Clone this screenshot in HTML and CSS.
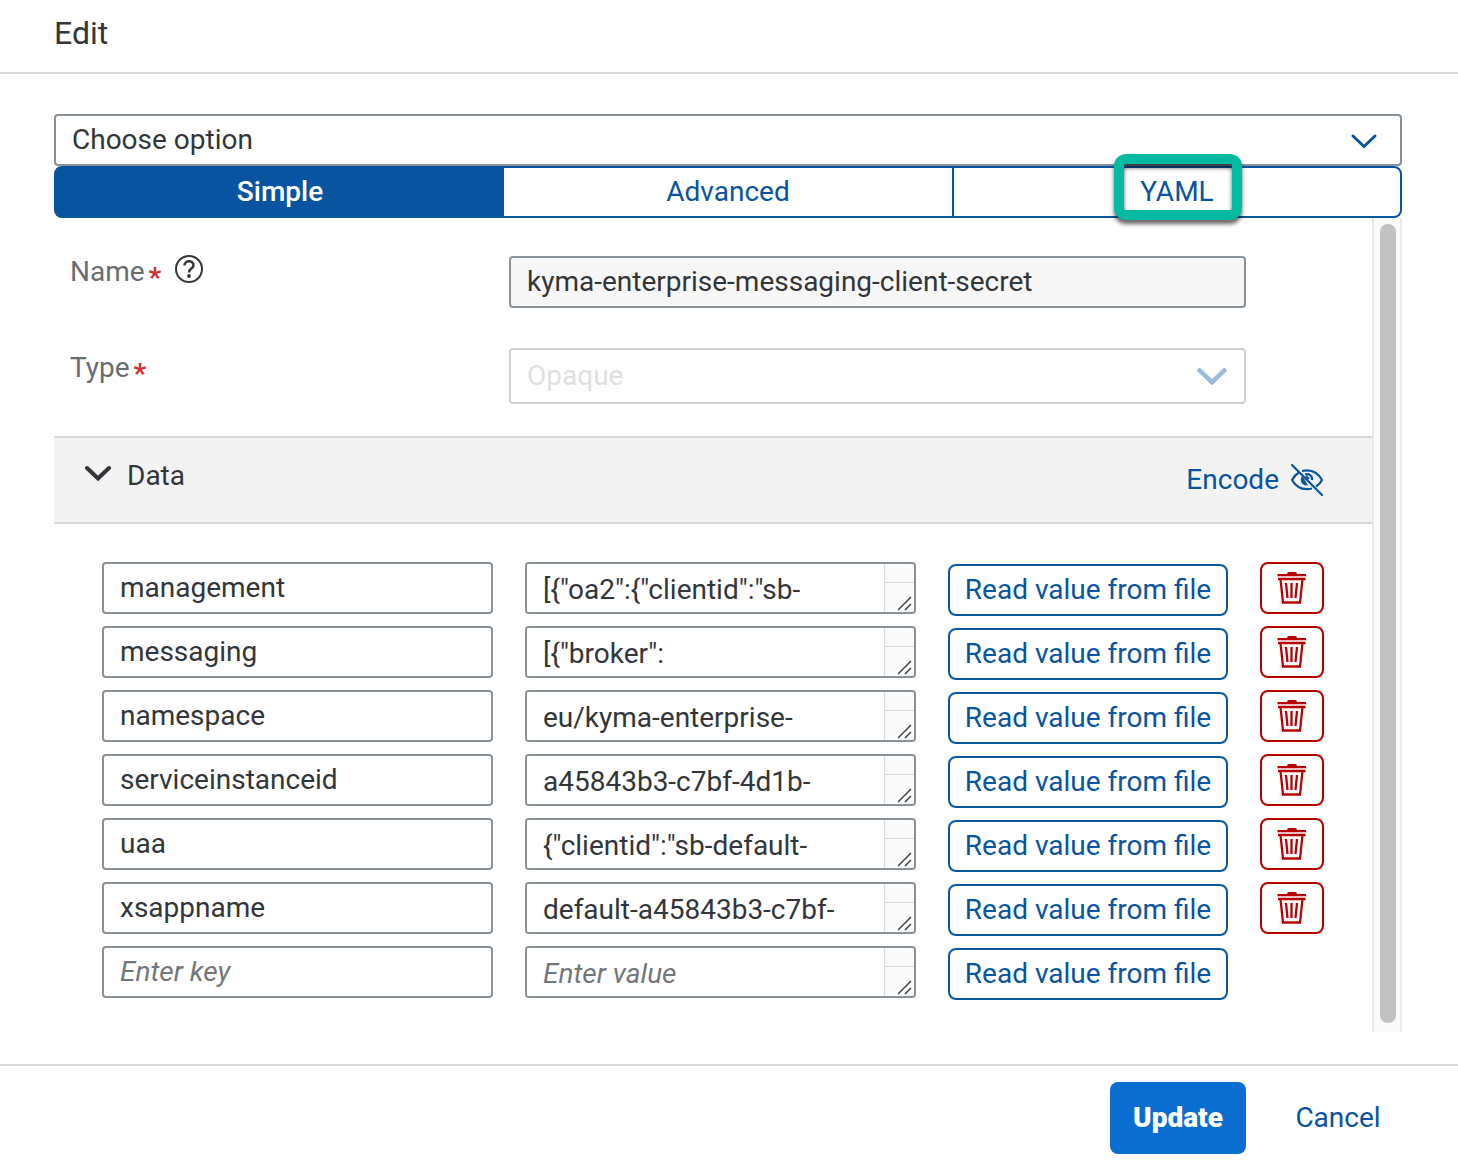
FILE: index.html
```html
<!DOCTYPE html>
<html lang="en">
<head>
<meta charset="utf-8">
<title>Edit</title>
<link rel="stylesheet" href="styles.css">
</head>
<body>
<svg class="sprite" aria-hidden="true">
  <symbol id="chevron" viewBox="0 0 28 16"><path d="M3 3l11 10.500L25 3" fill="none" stroke="currentColor" stroke-linecap="round"/></symbol>
  <symbol id="trash" viewBox="0 0 30 34">
    <path d="M10 3C10 1.500 11 1 13 1h4c2 0 3 .5 3 2h9v2.200H.5V3z" fill="currentColor"/>
    <path d="M1 8h27.500M3.500 8l2.500 23.500h17L25.500 8M9 12l1.500 15M14.500 12v15M20 12l-1.500 15" fill="none" stroke="currentColor" stroke-width="2.300"/>
  </symbol>
  <symbol id="grip" viewBox="0 0 16 16"><path d="M0 14L13 1M7 14l6-6" fill="none" stroke="#444" stroke-width="1.500"/></symbol>
</svg>
<main class="dialog">
  <header class="dialog-header"><h1>Edit</h1></header>
  <section class="dialog-body">
    <div class="select-box">
      <select class="field" aria-label="Choose option"><option>Choose option</option></select>
      <svg class="chevron chevron-thin"><use href="#chevron"/></svg>
    </div>
    <div class="tabs">
      <button class="tab tab-active" type="button">Simple</button>
      <button class="tab" type="button">Advanced</button>
      <button class="tab tab-last" type="button">YAML<span class="highlight"></span></button>
    </div>
    <div class="scroll-area">
      <div class="content">
        <div class="form">
          <div class="form-label"><label for="name">Name</label><span class="required">*</span>
            <svg class="help" viewBox="0 0 30 30"><circle cx="15" cy="15" r="13" fill="none" stroke="currentColor" stroke-width="2"/><path d="M10.500 11.500C10.500 6 19.500 6 19.500 11.200c0 3.600-4.500 3.200-4.500 7.300" fill="none" stroke="currentColor" stroke-width="2.500"/><circle cx="15" cy="22" r="1.900" fill="currentColor"/></svg>
          </div>
          <input class="field field-readonly" id="name" type="text" value="kyma-enterprise-messaging-client-secret" readonly>
          <div class="form-label form-label-tall"><label for="type">Type</label><span class="required">*</span></div>
          <div class="select-box select-disabled">
            <select class="field field-tall" id="type" disabled><option>Opaque</option></select>
            <svg class="chevron chevron-bold"><use href="#chevron"/></svg>
          </div>
        </div>
        <div class="panel-header">
          <button class="panel-toggle" type="button"><svg class="chevron chevron-dark"><use href="#chevron"/></svg>Data</button>
          <button class="encode" type="button">Encode
            <svg class="eye" viewBox="0 0 34 34" fill="none" stroke="currentColor" stroke-width="2.200">
              <path d="M9 9.500C5.500 11.500 3 15 2 17c5 8.500 12 10.500 20 8.500M12 8c9-2 16 2 20 9-1.500 3-3.500 5-6 6.500"/>
              <path d="M12 13c-3 5 0 10 6 9.500-1-2-4-7-6-9.500z" fill="currentColor" stroke="none"/>
              <path d="M15 11.500c4-1.500 7.500 1.500 7 5.500M16 13l3 3"/>
              <path d="M2 2l30 30" stroke-linecap="round"/>
            </svg>
          </button>
        </div>
        <div class="rows">
          <div class="row">
            <input class="field" type="text" aria-label="Key" value="management">
            <div class="value-box"><textarea class="value" aria-label="Value">[{"oa2":{"clientid":"sb-</textarea><span class="gutter"><svg class="grip"><use href="#grip"/></svg></span></div>
            <button class="read" type="button">Read value from file</button>
            <button class="delete" type="button" aria-label="Delete"><svg class="trash"><use href="#trash"/></svg></button>
          </div>
          <div class="row">
            <input class="field" type="text" aria-label="Key" value="messaging">
            <div class="value-box"><textarea class="value" aria-label="Value">[{"broker":</textarea><span class="gutter"><svg class="grip"><use href="#grip"/></svg></span></div>
            <button class="read" type="button">Read value from file</button>
            <button class="delete" type="button" aria-label="Delete"><svg class="trash"><use href="#trash"/></svg></button>
          </div>
          <div class="row">
            <input class="field" type="text" aria-label="Key" value="namespace">
            <div class="value-box"><textarea class="value" aria-label="Value">eu/kyma-enterprise-</textarea><span class="gutter"><svg class="grip"><use href="#grip"/></svg></span></div>
            <button class="read" type="button">Read value from file</button>
            <button class="delete" type="button" aria-label="Delete"><svg class="trash"><use href="#trash"/></svg></button>
          </div>
          <div class="row">
            <input class="field" type="text" aria-label="Key" value="serviceinstanceid">
            <div class="value-box"><textarea class="value" aria-label="Value">a45843b3-c7bf-4d1b-</textarea><span class="gutter"><svg class="grip"><use href="#grip"/></svg></span></div>
            <button class="read" type="button">Read value from file</button>
            <button class="delete" type="button" aria-label="Delete"><svg class="trash"><use href="#trash"/></svg></button>
          </div>
          <div class="row">
            <input class="field" type="text" aria-label="Key" value="uaa">
            <div class="value-box"><textarea class="value" aria-label="Value">{"clientid":"sb-default-</textarea><span class="gutter"><svg class="grip"><use href="#grip"/></svg></span></div>
            <button class="read" type="button">Read value from file</button>
            <button class="delete" type="button" aria-label="Delete"><svg class="trash"><use href="#trash"/></svg></button>
          </div>
          <div class="row">
            <input class="field" type="text" aria-label="Key" value="xsappname">
            <div class="value-box"><textarea class="value" aria-label="Value">default-a45843b3-c7bf-</textarea><span class="gutter"><svg class="grip"><use href="#grip"/></svg></span></div>
            <button class="read" type="button">Read value from file</button>
            <button class="delete" type="button" aria-label="Delete"><svg class="trash"><use href="#trash"/></svg></button>
          </div>
          <div class="row">
            <input class="field" type="text" aria-label="Key" placeholder="Enter key">
            <div class="value-box"><textarea class="value" aria-label="Value" placeholder="Enter value"></textarea><span class="gutter"><svg class="grip"><use href="#grip"/></svg></span></div>
            <button class="read" type="button">Read value from file</button>
          </div>
        </div>
      </div>
      <div class="scrollbar"><div class="thumb"></div></div>
    </div>
  </section>
  <footer class="dialog-footer">
    <button class="update" type="button">Update</button>
    <button class="cancel" type="button">Cancel</button>
  </footer>
</main>
</body>
</html>
```
FILE: styles.css
```css
* { box-sizing: border-box; }
body { margin: 0; background: #fff; color: #32363a; font: 28px/32px Roboto, sans-serif; }
button, input, select, textarea { margin: 0; font: inherit; color: inherit; }
button { padding: 0; border: 0; background: none; color: #0854a0; cursor: pointer; }
svg { display: block; }
.sprite { position: absolute; width: 0; height: 0; }

.dialog-header { padding: 16px 54px 22px; border-bottom: 2px solid #d9d9d9; }
h1 { margin: 0; font-size: 32px; line-height: 34px; font-weight: 400; }
.dialog-body { padding: 40px 56px 32px 54px; }

.field { display: block; width: 100%; min-width: 0; height: 52px; padding: 0 16px 2px; border: 2px solid #89919a; border-radius: 4px; background: #fff; appearance: none; outline: 0; }
select.field { padding-bottom: 0; }
.field-readonly { background: #f7f7f7; }
.field-tall { height: 56px; }
.field::placeholder, .value::placeholder { color: #74777a; font-style: italic; opacity: 1; }
.select-box { display: grid; align-items: center; }
.select-box > * { grid-area: 1 / 1; }
.select-box .chevron { justify-self: end; pointer-events: none; }
.select-disabled .field { border-color: #d0d3d6; color: #dedfe0; opacity: 1; }
.chevron { width: 28px; height: 16px; }
.chevron-thin { margin: 2px 24px 0 0; color: #0854a0; stroke-width: 3; }
.chevron-bold { width: 32px; height: 18px; margin-right: 18px; color: #9cbbdc; stroke-width: 4; }
.chevron-dark { margin-bottom: 6px; stroke-width: 4; }

.tabs { display: grid; grid-template-columns: repeat(3, 1fr); height: 52px; border: 2px solid #0854a0; border-radius: 8px; }
.tab { position: relative; }
.tab-last { border-left: 2px solid #0854a0; }
.tab-active { background: #0854a0; color: #fff; font-weight: 500; border-radius: 4px 0 0 4px; }
.highlight { position: absolute; top: -14px; left: 50%; width: 128px; height: 66px; margin-left: -63px; border: 10px solid #04bba1; border-radius: 12px; filter: drop-shadow(0 4px 2px rgba(0, 0, 0, .6)); }

.scroll-area { display: grid; grid-template-columns: minmax(0, 1fr) 30px; }
.form { display: grid; grid-template-columns: 439px minmax(0, 1fr); row-gap: 40px; padding: 38px 126px 32px 16px; }
.form-label { display: flex; align-items: flex-start; color: #6a6d70; }
.form-label-tall { padding-top: 4px; }
.required { margin-left: 4px; color: #d3312f; font-weight: 700; line-height: 44px; }
.help { width: 30px; height: 30px; margin: -2px 0 0 13px; color: #32363a; }

.panel-header { display: flex; justify-content: space-between; align-items: center; height: 88px; padding: 0 48px 0 30px; border: solid #d9d9d9; border-width: 2px 0; background: #f3f3f3; }
.panel-toggle { display: flex; align-items: center; gap: 15px; padding-bottom: 8px; color: #32363a; }
.encode { display: flex; align-items: center; gap: 11px; }
.eye { width: 34px; height: 34px; }

.rows { display: grid; gap: 10px; padding: 38px 48px 32px; }
.row { display: grid; grid-template-columns: minmax(0, 1fr) minmax(0, 1fr) 280px 64px; column-gap: 32px; height: 54px; }
.value-box { display: flex; height: 52px; border: 2px solid #89919a; border-radius: 4px; overflow: hidden; }
.value { flex: 1; min-width: 0; padding: 10px 0 6px 16px; border: 0; background: #fff; resize: none; overflow: hidden; outline: 0; white-space: nowrap; }
.gutter { display: flex; align-items: flex-end; justify-content: flex-end; width: 30px; border-left: 1px solid #d9d9d9; background: linear-gradient(#d9d9d9, #d9d9d9) 0 18px / 100% 1px no-repeat #fafafa; }
.grip { width: 16px; height: 16px; }
.read { align-self: end; height: 52px; border: 2px solid #0854a0; border-radius: 8px; white-space: nowrap; }
.delete { display: grid; place-items: center; height: 52px; border: 2px solid #b00; border-radius: 8px; color: #b00; }
.trash { width: 30px; height: 34px; }

.scrollbar { padding: 6px 4px 9px 6px; border: solid #e8e8e8; border-width: 0 2px; background: #fafafa; }
.thumb { height: 100%; border-radius: 8px; background: #c1c1c1; }

.dialog-footer { display: flex; justify-content: flex-end; gap: 28px; padding: 16px 56px 12px; border-top: 2px solid #d9d9d9; }
.update { width: 136px; height: 72px; border-radius: 8px; background: #0a6ed1; color: #fff; font-weight: 900; }
.cancel { width: 128px; height: 72px; }
```
